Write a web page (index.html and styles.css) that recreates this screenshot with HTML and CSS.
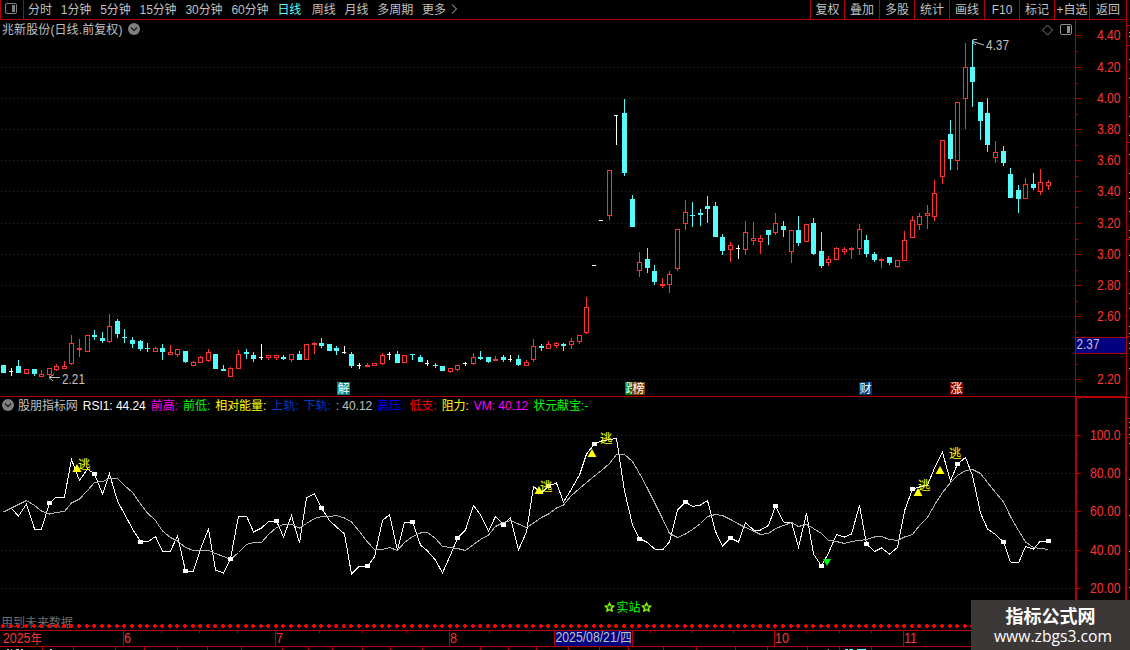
FILE: index.html
```html
<!DOCTYPE html>
<html lang="zh-CN">
<head>
  <meta charset="UTF-8">
  <title>兆新股份 日线</title>
  <link rel="stylesheet" href="styles.css">
</head>
<body>
  <div class="toolbar">
    <div class="toggle">
      <svg width="13" height="12"><rect x="0.5" y="0.5" width="11" height="10" rx="1.5" fill="none" stroke="#808080"/><rect x="7" y="2" width="3" height="7" fill="#808080"/></svg>
    </div>
    <div class="periods">
      <span>分时</span>
      <span>1分钟</span>
      <span>5分钟</span>
      <span>15分钟</span>
      <span>30分钟</span>
      <span>60分钟</span>
      <span class="active">日线</span>
      <span>周线</span>
      <span>月线</span>
      <span>多周期</span>
      <span>更多</span>
      <svg class="more" width="7" height="10"><path d="M1 0.5 L5.5 5 L1 9.5" fill="none" stroke="#c0c0c0"/></svg>
    </div>
    <div class="tools">
      <span>复权</span>
      <span>叠加</span>
      <span>多股</span>
      <span>统计</span>
      <span>画线</span>
      <span>F10</span>
      <span>标记</span>
      <span>+自选</span>
      <span class="last">返回</span>
    </div>
  </div>

  <div class="panel price">
    <div class="plot">
      <div class="title">
        <span>兆新股份(日线.前复权)</span>
        <svg class="drop" width="12" height="12"><circle cx="6" cy="6" r="6" fill="#808080"/><path d="M3 4.5 L6 7.5 L9 4.5" fill="none" stroke="#202020" stroke-width="1.4"/></svg>
        <svg class="corner" width="28" height="12">
          <path d="M6.5 1 L11.5 6 L6.5 11 L1.5 6 Z" fill="none" stroke="#808080"/>
          <rect x="19.5" y="0.5" width="11" height="10" rx="1.5" fill="none" stroke="#909090"/>
          <rect x="26" y="2" width="3" height="7" fill="#909090"/>
        </svg>
      </div>
      <svg id="priceChart" width="1075" height="356" viewBox="0 40 1075 356"></svg>
    </div>
    <svg id="priceAxis" width="55" height="376" viewBox="1075 20 55 376"></svg>
  </div>

  <div class="panel rsi">
    <div class="plot">
      <div class="legend">
        <svg class="drop" width="12" height="12"><circle cx="6" cy="6" r="6" fill="#808080"/><path d="M3 4.5 L6 7.5 L9 4.5" fill="none" stroke="#202020" stroke-width="1.4"/></svg>
        <span>股朋指标网</span>
        <span class="white">RSI1: 44.24</span>
        <span class="magenta">前高:</span>
        <span class="green">前低:</span>
        <span class="yellow">相对能量:</span>
        <span class="navy">上轨:</span>
        <span class="navy">下轨:</span>
        <span>: 40.12</span>
        <span class="blue">高压:</span>
        <span class="red">低支:</span>
        <span class="yellow">阻力:</span>
        <span class="magenta">VM: 40.12</span>
        <span class="green">状元献宝:-</span>
      </div>
      <svg id="rsiChart" width="1075" height="215" viewBox="0 415 1075 215"></svg>
    </div>
    <svg id="rsiAxis" width="55" height="234" viewBox="1075 396 55 234"></svg>
  </div>

  <svg id="timeAxis" width="1130" height="20" viewBox="0 630 1130 20"></svg>

  <div class="watermark">
    <div class="site">指标公式网</div>
    <div class="url">www.zbgs3.com</div>
  </div>

  <script>
    // type, high, body top, body bottom, low
    // r = up, d = down, w = unchanged, R = thin up body
    const candles = `d365,365,373,373 w368,371,372,376 d360,366,373,373 r369,369,374,374 d369,369,374,376
      r370,374,377,377 r368,368,375,378 r364,366,370,371 r361,366,369,369 r335,343,364,365
      R339,348,350,357 r335,335,352,352 d330,335,337,340 d332,338,341,343 r314,326,342,343
      d319,321,334,338 d329,337,338,343 d337,340,344,348 d340,341,349,351 d343,348,349,352
      r347,348,352,352 d344,348,352,360 r345,352,355,355 r349,349,355,357 d351,351,362,363
      r361,362,366,366 r356,357,363,363 r349,352,361,362 d354,354,369,369 d365,369,371,371
      r367,368,377,377 r350,354,369,369 d349,352,354,359 d352,355,359,362 w344,357,358,360
      r355,355,358,360 r355,355,358,360 d355,357,359,360 r354,354,360,362 d351,354,360,360
      r344,344,360,360 R342,343,345,354 d338,343,346,348 d344,344,351,351 d346,348,351,355
      w346,352,353,354 d352,354,366,368 w363,365,366,369 R363,365,367,367 r363,363,366,366
      r353,355,364,365 w352,354,355,360 d351,354,363,363 r355,355,363,363 d354,354,355,360
      d355,357,362,362 w360,363,364,366 d363,365,366,368 d366,366,371,371 r368,368,372,373
      r365,365,370,371 w362,363,364,366 r353,357,364,365 d351,357,359,360 d357,357,362,363
      R356,359,361,361 d355,357,360,362 w355,359,360,362 d355,359,365,366 r360,362,366,366
      r339,346,360,362 d344,346,348,351 r341,344,349,349 r342,343,346,348 d343,344,346,351
      r338,341,345,349 r335,335,342,344 r297,307,333,334 w265,265,266,266 w220,220,221,221
      r170,170,216,220 w115,115,116,145 d99,113,173,176 d195,199,227,227 r252,262,271,277
      d248,259,268,273 d265,271,282,285 R278,284,286,288 r271,274,285,293 r229,229,269,271
      r200,212,224,230 d202,215,216,227 d209,213,215,226 d196,206,209,223 d202,206,237,237
      d234,237,251,255 r242,245,250,262 w245,248,249,259 r221,232,250,255 r222,238,241,245
      r235,238,242,254 d230,230,235,245 r213,223,233,235 d221,226,230,237 r230,230,252,263
      d216,230,243,246 r224,224,242,242 d218,223,254,255 d232,251,266,268 r256,259,263,266
      r247,248,260,260 r247,249,252,255 R247,248,250,259 r224,229,249,255 d235,240,254,257
      d252,254,260,262 R258,259,261,268 d257,257,263,265 r260,260,267,268 r231,240,261,261
      r216,220,238,238 r213,216,225,230 r205,213,216,229 r180,193,217,221 r140,140,177,184
      d120,134,159,170 r102,102,161,170 r43,67,99,129 d40,67,82,107 d102,102,121,140
      d98,113,145,152 r141,152,158,163 d146,151,163,166 d168,174,198,198 d185,190,199,213
      r178,184,199,199 d173,184,188,190 r169,182,192,195 r180,182,186,190`.split(/\s+/);

    const rsi = [512,508.5,516,504,529,529,503,497,497,459.5,480.5,469,474,494,474,501,514,529,541.5,542,
      536.5,551,551,536,571,571,549,529,570,573,559,516,516,532,528,521.5,521,537,515.5,543,
      497.5,494,508,520.5,527,534,574,566,566,557,520.5,514.5,550.5,522,522,545,551,560,573,555,
      538,530,505.5,515,531,516.5,524.5,517.5,550,532,486.5,493,486,483,502,489,475,454,444,441,
      439.5,438.5,491,525,538.5,542.5,549,550,542,510,502,506.5,505,500.5,531.5,546,538,542,522.5,530,
      530,525.5,506,522,522.5,547,513.5,554,566,553,534.5,537,534,505.5,544,551.5,548,554,547.5,511,
      489,487,485,468,452.5,481,464,457.5,475.5,513,529,534.5,542,562,563,546.5,549,541,541];

    const average = [512,508,504.5,500.5,505.5,511,514,512.5,511.5,503,499,490.5,482.5,481.5,478.5,478.5,485.5,492.5,504,513,
      520.5,531,537.5,541,547.5,550.5,551,550.5,553.5,556.5,559.5,552.5,544.5,542.5,542.5,534.5,527.5,524.5,524.5,528,
      523.5,518.5,516.5,516.5,515.5,518,522,531.5,542,549.5,549.5,547.5,550.5,542.5,536.5,533,532.5,538.5,546.5,547.5,
      548.5,550.5,544.5,539.5,535,526.5,522.5,520.5,524,527.5,523,517.5,514,508,505,495.5,488.5,482.5,476,470.5,
      463.5,454.5,454.5,461.5,473.5,488.5,502.5,518.5,533.5,537.5,534,529.5,523.5,516.5,514.5,515.5,519.5,524,527.5,531,
      534.5,533.5,528.5,525.5,522.5,526.5,524.5,528.5,533.5,540.5,541.5,543.5,541.5,540.5,539.5,537,536.5,539.5,540.5,537,
      534.5,525.5,517.5,505,492.5,482.5,475.5,470.5,469.5,473.5,482.5,492.5,502,516.5,530.5,542,547.5,548.5,549.5];

    const RED = '#b40000';
    const colors = { r: '#ff3232', R: '#ff3232', d: '#54fcfc', w: '#ffffff' };

    function barX(i) {
      return Math.floor(3.74 + i * 7.5708);
    }
    function rect(x, y, w, h, fill) {
      return `<rect x="${x}" y="${y}" width="${w}" height="${h}" fill="${fill}"/>`;
    }
    function text(x, y, str, cls, width) {
      const len = width ? ` textLength="${width}" lengthAdjust="spacingAndGlyphs"` : '';
      return `<text x="${x}" y="${y}" class="${cls}"${len}>${str}</text>`;
    }
    function gridLine(y) {
      return `<line x1="1" x2="1075" y1="${y + 0.5}" y2="${y + 0.5}" class="grid"/>`;
    }
    function draw(id, html) {
      document.getElementById(id).innerHTML = html;
    }

    function buildPrice() {
      let out = [67, 98, 129, 160, 191, 223, 254, 285, 316, 348, 379].map(gridLine).join('');
      candles.forEach((c, i) => {
        const type = c[0];
        const [high, top, bottom, low] = c.slice(1).split(',').map(Number);
        const x = barX(i);
        const color = colors[type];
        if (type === 'r') {
          out += rect(x, high, 1, top - high, color) + rect(x, bottom, 1, low - bottom, color);
          out += `<rect x="${x - 1.5}" y="${top + 0.5}" width="4" height="${bottom - top - 1}" fill="#000" stroke="${color}"/>`;
        } else {
          out += rect(x, high, 1, low - high, color);
          out += rect(x - 2, top, type === 'w' ? 4 : 5, bottom - top, color);
        }
      });
      out += '<path d="M60 377.5 H49 M54 374.5 L49 377.5 L53 381" class="arrow"/>';
      out += '<path d="M984 45 L973 41.5 M977 39.5 H973 V43 L976 45" class="arrow"/>';
      out += text(62, 384, '2.21', 'note', 23) + text(986, 50, '4.37', 'note', 23);
      [[337, '解', '#008080'], [625, '跌', '#008000'], [632, '榜', '#804000'], [859, '财', '#003c78'], [950, '涨', '#800000']].forEach(b => {
        out += rect(b[0], 382, 13, 13, b[2]) + text(b[0] + 0.5, 393, b[1], 'badge');
      });
      draw('priceChart', out);
    }

    function edgeMarks(reds, grays) {
      return reds.map(y => rect(1127, y, 3, 1, RED)).join('') + grays.map(y => rect(1129, y, 1, 1, '#c0c0c0')).join('');
    }

    function buildPriceAxis() {
      let out = rect(1075, 20, 1, 376, RED) + rect(1126, 0, 1, 396, RED);
      const ys = [35, 67, 98, 129, 160, 191, 223, 254, 285, 316, 348, 379];
      ys.forEach((y, i) => {
        out += rect(1076, y, 5, 1, RED);
        if (i < 11) out += rect(1076, y + 16, 2, 1, RED);
        if (i !== 10) out += text(1097, y + 5, (4.4 - i * 0.2).toFixed(2), 'scale', 23.5);
      });
      out += rect(1076, 337, 50, 17, RED) + rect(1076, 338, 50, 15, '#000080');
      out += text(1076.5, 349, '2.37', 'note', 23);
      out += edgeMarks([25, 45, 142, 239, 336], [32, 36, 59, 78, 97, 116, 135, 154, 173, 192, 198, 211, 230, 237, 255, 271, 293, 308, 326, 333, 343, 348, 368]);
      draw('priceAxis', out);
    }

    function star(cx, cy) {
      let pts = '';
      for (let k = 0; k < 10; k++) {
        const r = k % 2 ? 2.2 : 4.4;
        const a = Math.PI * (k / 5 - 0.5);
        pts += `${cx + r * Math.cos(a)},${cy + r * Math.sin(a)} `;
      }
      return `<polygon points="${pts}" fill="#204000" stroke="#90ff10" stroke-width="1.3"/>`;
    }

    function buildRsi() {
      let out = [435, 473, 511, 550, 588].map(gridLine).join('');
      const points = list => list.map((y, i) => `${barX(i) + 0.5},${y}`).join(' ');
      out += `<polyline points="${points(rsi)}" class="line main"/>`;
      out += `<polyline points="${points(average)}" class="line avg"/>`;
      for (let i = 6; i < rsi.length; i += 6) {
        out += rect(barX(i) - 2, Math.round(rsi[i]) - 2, 5, 4, '#fff');
      }
      [[77, 464], [539, 486], [592, 449], [918, 488], [940, 466]].forEach(p => {
        out += `<path d="M${p[0]} ${p[1]} l4.5 8 h-9 z" fill="#ffff00"/>`;
      });
      [[78, 469], [540, 491], [600, 443], [918, 490], [949, 458]].forEach(p => {
        out += text(p[0], p[1], '逃', 'escape');
      });
      out += '<path d="M823 559 h8 l-4 7 z" fill="#00ff00"/>';
      out += star(609.5, 607.5) + text(616.5, 612, '实站', 'station') + star(646.5, 607.5);
      out += text(1, 627, '用到未来数据', 'future');
      for (let i = 0; i < candles.length; i++) {
        out += rect(barX(i) - 2, 625, 4, 2, '#ff0000') + rect(barX(i) - 1, 624, 2, 4, '#ff0000');
      }
      draw('rsiChart', out);
    }

    function buildRsiAxis() {
      let out = rect(1075, 396, 52, 2, RED) + rect(1075, 396, 2, 234, RED) + rect(1125, 396, 2, 234, RED);
      [435, 473, 511, 550, 588].forEach((y, i) => {
        out += rect(1077, y, 4, 1, RED);
        if (i < 4) out += rect(1077, y + 19, 1, 1, RED);
        out += text(1090, y + 5, ['100.0', '80.00', '60.00', '40.00', '20.00'][i], 'scale', 30.5);
      });
      out += edgeMarks([397, 418, 437], [422, 427, 434, 443, 479, 515, 551, 569, 587]);
      draw('rsiAxis', out);
    }

    function buildTimeAxis() {
      let out = rect(0, 630, 1130, 1, RED) + rect(0, 646, 1130, 1, RED);
      [123, 275, 449, 554, 632, 774, 903].forEach(x => out += rect(x, 631, 1, 15, RED));
      [161, 199, 237, 319, 362, 406, 489, 529, 650, 691, 733, 806, 839, 871].forEach(x => out += rect(x, 631, 1, 2, RED));
      [42, 73, 115, 144, 177, 207, 241, 282, 308, 332, 362, 390, 422, 480, 508, 536, 568, 599, 628, 663, 696, 735, 767, 807, 839, 871]
        .forEach(x => out += rect(x, 647, 1, 3, RED));
      out += text(3, 643, '2025<tspan class="year">年</tspan>', 'scale', 39);
      [[124, '6'], [276, '7'], [450, '8']].forEach(m => out += text(m[0], 643, m[1], 'scale', 7));
      out += text(775, 643, '10', 'scale', 14) + text(904, 643, '11', 'scale', 13);
      out += rect(555, 631, 77, 15, '#000080') + text(555.5, 642, '2025/08/21/<tspan class="year">四</tspan>', 'note', 76);
      // tops of the row below
      [[7, 2], [11, 1], [16, 3], [21, 2], [50, 2]].forEach(m => out += rect(m[0], 649, m[1], 1, '#c0c0c0'));
      out += rect(828, 649, 1, 1, '#c0c0c0') + rect(845, 649, 3, 1, '#54fcfc') + rect(849, 649, 4, 1, '#54fcfc') + rect(857, 649, 9, 1, '#54fcfc');
      draw('timeAxis', out);
    }

    buildPrice();
    buildPriceAxis();
    buildRsi();
    buildRsiAxis();
    buildTimeAxis();
  </script>
</body>
</html>
```
FILE: styles.css
```css
body {
  margin: 0;
  width: 1130px;
  height: 650px;
  overflow: hidden;
  position: relative;
  background: #000;
  color: #c0c0c0;
  font-family: "Liberation Sans", "Noto Sans CJK SC", sans-serif;
  font-size: 12px;
  line-height: 18px;
}
svg { display: block; flex: none; overflow: visible; }
span { white-space: nowrap; }
.toolbar {
  display: flex;
  box-sizing: border-box;
  width: 1127px;
  height: 20px;
  border-bottom: 1px solid #b40000;
  border-right: 1px solid #b40000;
  line-height: 20px;
}
.toggle {
  box-sizing: border-box;
  width: 24px;
  padding: 3px 0 0 4px;
  border-left: 1px solid #b40000;
  border-right: 1px solid #b40000;
}
.periods {
  display: flex;
  gap: 9px;
  flex: 1;
  padding-left: 4px;
  letter-spacing: -0.1px;
}
.periods .active {
  margin-right: 1.5px;
  color: #54fcfc;
}
.more { margin: 4px 0 0 -4px; }
.tools { display: flex; }
.tools span {
  box-sizing: border-box;
  width: 35px;
  height: 19px;
  border-left: 1px solid #b40000;
  text-align: center;
}
.tools span:first-child { width: 34px; }
.tools .last { width: 37px; }
.panel { display: flex; }
.plot { width: 1075px; }
.price { height: 376px; }
.title {
  display: flex;
  height: 20px;
  padding-left: 2px;
  line-height: 20px;
  letter-spacing: 0.1px;
}
.title .drop { margin: 3px 0 0 5px; }
.corner { margin: 4px 6px 0 auto; }
.rsi { height: 234px; }
.legend {
  display: flex;
  gap: 5px;
  box-sizing: border-box;
  height: 19px;
  padding-left: 2px;
  border-top: 1px solid #b40000;
  line-height: 18px;
  letter-spacing: -0.04px;
}
.legend .drop { margin: 2px -1px 0 0; }
.white { color: #fff; }
.magenta { color: #f0f; }
.green { color: #0f0; }
.yellow { color: #ff0; }
.navy { color: #003cbe; }
.blue { color: #00f; }
.red { color: #f00; }
.grid {
  stroke: #a00000;
  stroke-dasharray: 1 3;
}
.arrow { fill: none; stroke: #c0c0c0; }
.line { fill: none; shape-rendering: crispEdges; }
.main { stroke: #fff; }
.avg { stroke: #b4b4b4; }
.scale { fill: #ff3232; font-size: 14px; }
.note { fill: #c0c0c0; font-size: 14px; }
.year { font-size: 13px; }
.badge { fill: #fff; font-size: 12px; }
.escape { fill: #ff0; font-size: 12.5px; }
.station { fill: #0f0; font-size: 12px; }
.future { fill: #6c6c6c; font-size: 12px; }
.watermark {
  position: absolute;
  right: 0;
  bottom: 0;
  width: 159px;
  height: 50px;
  background: #3c3838;
  color: #fff;
  text-align: center;
}
.site {
  margin-top: 3px;
  font-family: "Noto Sans CJK SC", sans-serif;
  font-size: 18px;
  font-weight: bold;
  line-height: 24px;
}
.url {
  padding-left: 5px;
  font-family: "Open Sans", sans-serif;
  font-size: 15.7px;
  line-height: 18px;
}
```
